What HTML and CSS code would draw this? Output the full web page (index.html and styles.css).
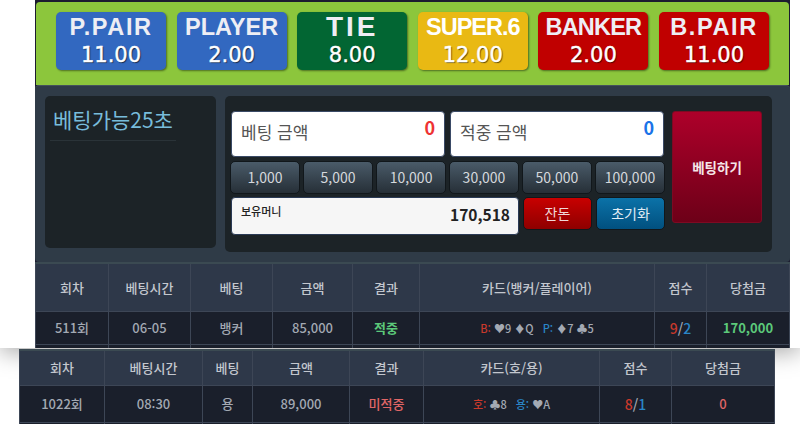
FILE: index.html
```html
<!DOCTYPE html>
<html lang="ko">
<head>
    <meta charset="UTF-8">
    <meta name="viewport" content="width=device-width, initial-scale=1.0">
    <title>베팅</title>
    <link rel="stylesheet" href="styles.css">
</head>
<body>
    <div class="strip">
        <div class="shot shot-top">
            <div class="odds-bar">
                <div class="odds blue"><b class="ppair">P.PAIR</b><span>11.00</span></div>
                <div class="odds blue"><b>PLAYER</b><span>2.00</span></div>
                <div class="odds green"><b class="tie">TIE</b><span>8.00</span></div>
                <div class="odds yellow"><b class="super">SUPER.6</b><span>12.00</span></div>
                <div class="odds red"><b class="banker">BANKER</b><span>2.00</span></div>
                <div class="odds red"><b class="ppair">B.PAIR</b><span>11.00</span></div>
            </div>

            <div class="bet-panel">
                <div class="timer-box">
                    <div class="timer">베팅가능25초</div>
                </div>
                <div class="bet-box">
                    <div class="bet-main">
                        <div class="amount-row">
                            <div class="amount">베팅 금액<em class="num-red">0</em></div>
                            <div class="amount">적중 금액<em class="num-blue">0</em></div>
                        </div>
                        <div class="chip-row">
                            <button class="chip">1,000</button>
                            <button class="chip">5,000</button>
                            <button class="chip">10,000</button>
                            <button class="chip">30,000</button>
                            <button class="chip">50,000</button>
                            <button class="chip">100,000</button>
                        </div>
                        <div class="money-row">
                            <div class="money"><small>보유머니</small><strong>170,518</strong></div>
                            <button class="chip chip-red">잔돈</button>
                            <button class="chip chip-blue">초기화</button>
                        </div>
                    </div>
                    <button class="bet-btn">베팅하기</button>
                </div>
            </div>

            <table class="log log-top">
                <thead>
                    <tr><th>회차</th><th>베팅시간</th><th>베팅</th><th>금액</th><th>결과</th><th>카드(뱅커/플레이어)</th><th>점수</th><th>당첨금</th></tr>
                </thead>
                <tbody>
                    <tr>
                        <td>511회</td><td>06-05</td><td>뱅커</td><td>85,000</td><td class="win">적중</td>
                        <td class="cards"><i class="c-red">B:</i> ♥9 ♦Q <i class="c-blue gap">P:</i> ♦7 ♣5</td>
                        <td class="score"><i class="c-red">9</i>/<i class="c-blue">2</i></td><td class="win">170,000</td>
                    </tr>
                    <tr class="cut"><td></td><td></td><td></td><td></td><td></td><td></td><td></td><td></td></tr>
                </tbody>
            </table>
        </div>
    </div>

    <div class="shot shot-bottom">
        <table class="log log-bottom">
            <thead>
                <tr><th>회차</th><th>베팅시간</th><th>베팅</th><th>금액</th><th>결과</th><th>카드(호/용)</th><th>점수</th><th>당첨금</th></tr>
            </thead>
            <tbody>
                <tr>
                    <td>1022회</td><td>08:30</td><td>용</td><td>89,000</td><td class="lose">미적중</td>
                    <td class="cards"><i class="c-red">호:</i> ♣8 <i class="c-blue gap">용:</i> ♥A</td>
                    <td class="score"><i class="c-red">8</i>/<i class="c-blue">1</i></td><td class="lose">0</td>
                </tr>
                <tr class="cut"><td></td><td></td><td></td><td></td><td></td><td></td><td></td><td></td></tr>
            </tbody>
        </table>
    </div>
</body>
</html>
```

FILE: styles.css
```css
* {
    box-sizing: border-box;
}
html, body {
    height: 424px;
    overflow: hidden;
}
body {
    margin: 0;
    background-color: #ffffff;
    font-family: "Noto Sans CJK KR", "Noto Sans", sans-serif;
}
.strip {
    height: 348px;
    background-color: #ffffff;
    box-shadow: 0 4px 22px rgba(0, 0, 0, 0.35);
}
.shot {
    overflow: hidden;
}
.shot-top {
    width: 755px;
    height: 348px;
    margin-left: 35px;
    background-color: #1c1c30;
}
.shot-bottom {
    width: 756px;
    height: 75px;
    margin-top: 1px;
    margin-left: 19px;
    position: relative;
}

/* odds bar */
.odds-bar {
    display: flex;
    gap: 10.6px;
    height: 83px;
    margin: 2px 1px 0;
    padding: 10px 0 0 20px;
    background-color: #8cc63c;
    border-radius: 4px 4px 0 0;
}
.odds {
    display: flex;
    flex-direction: column;
    align-items: center;
    width: 110px;
    height: 58px;
    border-radius: 5px;
    color: #eeeef4;
    box-shadow: 1px 1px 2px rgba(0, 0, 0, 0.45);
}
.odds b {
    height: 31px;
    font-family: "Liberation Sans", sans-serif;
    font-size: 23.5px;
    font-weight: 700;
    line-height: 30px;
}
.odds b.ppair {
    letter-spacing: 1.6px;
}
.odds b.banker {
    letter-spacing: -0.8px;
}
.odds b.tie {
    font-size: 28px;
    letter-spacing: 3px;
}
.odds b.super {
    letter-spacing: -1px;
    color: #ffffff;
}
.odds span {
    font-family: "DejaVu Sans", sans-serif;
    font-size: 21px;
    line-height: 24px;
    color: #ffffff;
    -webkit-text-stroke: 0.4px #ffffff;
    text-shadow: 1px 1px 1px rgba(0, 0, 0, 0.6);
}
.blue { background-color: #3268c0; }
.green { background-color: #026633; }
.yellow { background-color: #e9b913; }
.red { background-color: #c00000; }

/* bet panel */
.bet-panel {
    display: flex;
    gap: 9px;
    height: 177px;
    padding: 10px 18px 0 10px;
    background-color: #2f3b47;
    border-top: 1px solid #44525c;
    border-radius: 4px;
}
.timer-box {
    width: 171px;
    height: 152px;
    padding: 0 5px;
    background-color: #1c2327;
    border-radius: 5px;
}
.timer {
    width: 126px;
    height: 45px;
    padding: 7px 3px 0;
    font-size: 21px;
    line-height: 32px;
    white-space: nowrap;
    color: #78bcdb;
    border-bottom: 1px solid #2a3338;
}
.bet-box {
    display: flex;
    gap: 7px;
    width: 547px;
    height: 156px;
    padding: 15px 0 0 5px;
    background-color: #1c2327;
    border-radius: 5px;
}
.bet-main {
    width: 435px;
}
.amount-row {
    display: flex;
    gap: 5px;
    margin-left: 1px;
}
.amount {
    display: flex;
    justify-content: space-between;
    width: 214px;
    height: 46px;
    padding: 7px 9px 0;
    background-color: #ffffff;
    border: 1px solid #3a4a66;
    border-radius: 4px;
    font-size: 17px;
    line-height: 26px;
    color: #555555;
}
.amount em {
    font-style: normal;
    font-weight: 700;
    line-height: 17px;
    font-size: 18px;
}
.num-red { color: #ee3333; }
.num-blue { color: #1a73e8; }
.chip-row, .money-row {
    display: flex;
    gap: 2.8px;
    margin-top: 4px;
}
.chip {
    flex: 1;
    height: 33px;
    padding: 0 0 2px;
    font-family: inherit;
    font-size: 14px;
    color: #d5d8dc;
    background: linear-gradient(#4a5b69, #262f37);
    border: 1px solid #11171b;
    border-radius: 5px;
}
.money-row {
    gap: 4px;
    margin-top: 3px;
}
.money {
    display: flex;
    justify-content: space-between;
    flex: none;
    width: 288px;
    height: 38px;
    margin-left: 1px;
    padding: 0 8px 0 9px;
    background-color: #f6f6f6;
    border: 1px solid #2a3a55;
    border-radius: 4px;
    color: #222222;
}
.money small {
    font-size: 11px;
    font-weight: 500;
    line-height: 27px;
}
.money strong {
    font-size: 15.5px;
    line-height: 33px;
}
.chip-red {
    color: #f0d8d8;
    background: linear-gradient(#c80000, #8e0000);
}
.chip-blue {
    color: #e0edf5;
    background: linear-gradient(#0b72a8, #01507f);
}
.bet-btn {
    width: 90px;
    height: 112px;
    padding: 0;
    font-family: inherit;
    font-size: 13.5px;
    font-weight: 700;
    color: #f5e5e8;
    background: linear-gradient(#ad002a, #6d0018);
    border: 1px solid #7d0a22;
    border-radius: 3px;
}

/* tables */
.log {
    width: 100%;
    border-collapse: collapse;
    table-layout: fixed;
    font-size: 13px;
    text-align: center;
    color: #a3a9b3;
    border-top: 2px solid #3b4a52;
}
.log th, .log td {
    padding: 0;
    border: 1px solid #3d4656;
    font-weight: 500;
}
.log th {
    background-color: #2e3849;
    color: #c3c7ce;
}
.log td {
    background-color: #1a1f2b;
}
.log i {
    font-style: normal;
}
.log-top th {
    height: 48px;
}
.log-top td {
    height: 33px;
}
.log tr.cut td {
    height: 10px;
}
.log-top th:nth-child(1) { width: 73px; }
.log-top th:nth-child(2) { width: 82px; }
.log-top th:nth-child(3) { width: 82px; }
.log-top th:nth-child(4) { width: 80px; }
.log-top th:nth-child(5) { width: 67px; }
.log-top th:nth-child(6) { width: 235px; }
.log-top th:nth-child(7) { width: 52px; }
.log-bottom th {
    height: 35px;
}
.log-bottom td {
    height: 37px;
}
.log-bottom th:nth-child(1) { width: 85px; }
.log-bottom th:nth-child(2) { width: 98px; }
.log-bottom th:nth-child(3) { width: 50px; }
.log-bottom th:nth-child(4) { width: 97px; }
.log-bottom th:nth-child(5) { width: 74px; }
.log-bottom th:nth-child(6) { width: 176px; }
.log-bottom th:nth-child(7) { width: 72px; }
.log td.win {
    color: #5cc97a;
    font-weight: 700;
}
.log td.lose {
    color: #e06666;
}
.log td.cards {
    font-size: 11px;
}
.cards .gap {
    margin-left: 6px;
}
.log td.score {
    font-size: 14px;
}
.c-red { color: #c8392b; }
.c-blue { color: #2a86c8; }
```
